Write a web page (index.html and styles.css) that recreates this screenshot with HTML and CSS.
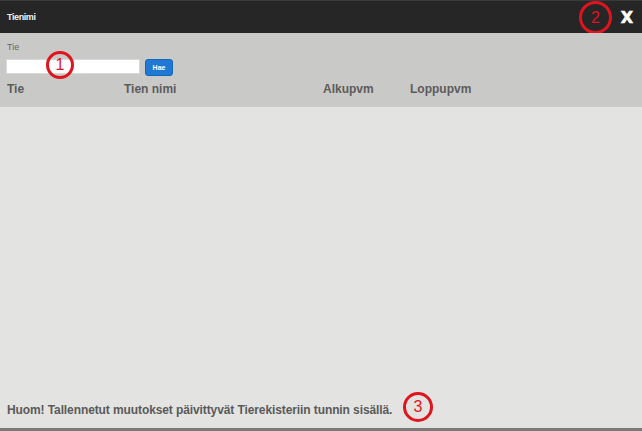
FILE: index.html
```html
<!DOCTYPE html>
<html>
<head>
<meta charset="utf-8">
<link rel="stylesheet" href="styles.css">
</head>
<body>
<div class="dialog">
  <div class="header">
    <span class="title">Tienimi</span>
    <span class="close">X</span>
    <span class="mark mark2">2</span>
  </div>
  <div class="panel">
    <div class="label">Tie</div>
    <div class="search">
      <input class="input" type="text">
      <button class="btn">Hae</button>
    </div>
    <div class="cols">
      <span>Tie</span>
      <span>Tien nimi</span>
      <span>Alkupvm</span>
      <span>Loppupvm</span>
    </div>
    <span class="mark mark1">1</span>
  </div>
  <div class="content"></div>
  <div class="footer">
    <span class="note">Huom! Tallennetut muutokset päivittyvät Tierekisteriin tunnin sisällä.</span>
    <span class="mark mark3">3</span>
  </div>
</div>
</body>
</html>
```

FILE: styles.css
```css
html, body {
  margin: 0;
  padding: 0;
}
body {
  width: 642px;
  height: 431px;
  overflow: hidden;
  font-family: "Liberation Sans", Arial, sans-serif;
  background: #e3e3e1;
}
.dialog {
  display: flex;
  flex-direction: column;
  height: 431px;
  position: relative;
  border-bottom: 3px solid #7a7a7a;
  box-sizing: border-box;
}
.header {
  height: 33px;
  background: #262626;
  border-top: 1px solid #3a3a3a;
  box-sizing: border-box;
  display: flex;
  align-items: center;
  justify-content: space-between;
  padding: 0 9px 0 7px;
  position: relative;
}
.title {
  color: #f2f2f2;
  font-size: 9px;
  font-weight: bold;
  letter-spacing: -0.4px;
}
.close {
  color: #ffffff;
  font-size: 16px;
  font-weight: bold;
  font-family: "DejaVu Sans", sans-serif;
  -webkit-text-stroke: 0.6px #fff;
}
.panel {
  height: 74px;
  background: #c9c9c7;
  box-sizing: border-box;
  padding: 9px 7px 0 6px;
  position: relative;
}
.label {
  font-size: 9px;
  color: #666;
  padding-left: 1px;
  height: 15px;
}
.search {
  display: flex;
  align-items: center;
  gap: 5px;
}
.input {
  width: 134px;
  height: 15px;
  box-sizing: border-box;
  border: 1px solid #d8d8d8;
  background: #fff;
  margin: 0;
  padding: 0;
}
.btn {
  width: 28px;
  height: 17px;
  background: #1f78d4;
  border: 1px solid #1565b8;
  border-radius: 3px;
  color: #fff;
  font-size: 7px;
  font-weight: bold;
  font-family: "Liberation Sans", Arial, sans-serif;
  padding: 0;
  margin: 0;
  margin-top: 2px;
}
.cols {
  display: grid;
  grid-template-columns: 117px 199px 87px 1fr;
  padding-left: 1px;
  margin-top: 6px;
  font-size: 12px;
  font-weight: bold;
  color: #5c5c5c;
}
.content {
  flex: 1;
}
.footer {
  height: 44px;
  display: flex;
  align-items: center;
  padding: 8px 7px 0;
  box-sizing: border-box;
  position: relative;
}
.note {
  font-size: 12px;
  font-weight: bold;
  letter-spacing: -0.1px;
  color: #5a5a5a;
}
.mark {
  position: absolute;
  box-sizing: border-box;
  border: 3px solid #e0141e;
  border-radius: 50%;
  color: #e0141e;
  font-family: "Liberation Sans", Arial, sans-serif;
  font-size: 16px;
  display: flex;
  align-items: center;
  justify-content: center;
}
.mark1 {
  left: 46px;
  top: 18px;
  width: 28px;
  height: 28px;
}
.mark2 {
  left: 579px;
  top: 0px;
  width: 33px;
  height: 33px;
}
.mark3 {
  left: 403px;
  top: 8px;
  width: 30px;
  height: 30px;
}
```
